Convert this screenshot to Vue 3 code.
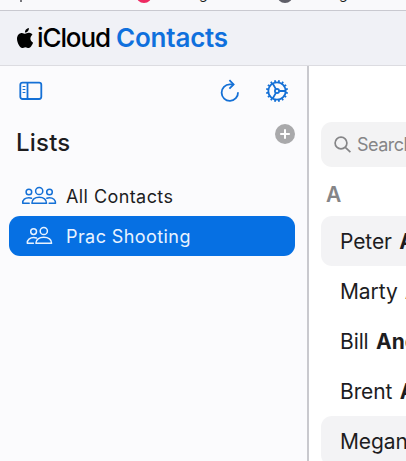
<template>
  <div class="app">
    <div class="browser-strip">
      <span class="strip-tick"></span>
      <span class="strip-dot pink"></span>
      <span class="strip-text">g</span>
      <span class="strip-dot grey"></span>
      <span class="strip-text second">g</span>
    </div>

    <header class="header">
      <svg class="apple" viewBox="62 0 682 1000" preserveAspectRatio="none" aria-hidden="true">
        <path d="M744 341c-6 4-93 62-93 190 0 148 112 200 116 202-1 3-18 72-60 142-36 61-75 123-134 123s-74-40-141-40c-66 0-89 41-143 41s-91-57-134-127C104 790 62 663 62 542c0-194 109-297 217-297 57 0 105 43 141 43 35 0 88-46 153-46 25 0 114 3 171 99zM541 159c27-37 46-88 46-139 0-7-1-14-2-20-43 2-95 34-127 75-24 32-47 83-47 135 0 8 1 16 2 18 3 1 7 1 11 1 39 0 88-30 117-70z" />
      </svg>
      <span class="brand">iCloud</span>
      <span class="product">Contacts</span>
    </header>

    <div class="body">
      <aside class="sidebar">
        <div class="toolbar">
          <svg class="icon-panel" width="24" height="20" viewBox="0 0 24 20">
            <rect x="1.3" y="1.6" width="21" height="16.4" rx="2.2" />
            <path d="M8.5 1.6v16.4" />
            <path class="thin" d="M3.6 5.5h2.8M3.6 8.5h2.8M3.6 11.5h2.8" />
          </svg>
          <svg class="icon-refresh" width="20" height="24" viewBox="0 0 20 24">
            <path d="M18 13.2A8.2 8.2 0 1 1 9.8 5.4h3.6" />
            <path d="M9.4 1.2l4.2 4.2-4.2 4.2" />
          </svg>
          <svg class="icon-gear" width="24" height="24" viewBox="-12 -12 24 24">
            <circle r="8.7" />
            <circle r="2.1" />
            <path d="M2.1 0H8.6M-1.1-1.9L-4.3-7.5M-1.1 1.9L-4.3 7.5" />
            <path v-for="n in 16" :key="n" d="M0-8.8V-11" :transform="`rotate(${n * 22.5 + 11.25})`" />
          </svg>
        </div>

        <div class="lists-head">
          <h2>Lists</h2>
          <svg width="20" height="20" viewBox="0 0 20 20">
            <circle cx="10" cy="10" r="10" fill="#a9a9ab" />
            <path d="M10 5.2v9.6M5.2 10h9.6" stroke="#fff" stroke-width="2" />
          </svg>
        </div>

        <ul class="lists">
          <li v-for="list in lists" :key="list.name" :class="{ selected: list.selected }">
            <svg v-if="list.selected" class="people" width="36" height="20" viewBox="0 0 36 20">
              <circle cx="12.6" cy="5.6" r="2.9" />
              <circle cx="22.8" cy="5" r="3.6" />
              <path d="M14.9 17.3c-.2-3.9 3.3-6 7.9-6s8 2.1 7.8 6z" />
              <path d="M12.4 17.3H6.3c-.2-3.5 2.7-5.7 6.5-5.7q1.5 0 2.6.4" />
            </svg>
            <svg v-else class="people" width="36" height="20" viewBox="0 0 36 20">
              <circle cx="7.9" cy="6" r="2.8" />
              <circle cx="18.2" cy="5" r="3.6" />
              <circle cx="28.5" cy="6" r="2.8" />
              <path d="M10.9 17.3c-.2-3.9 2.9-6 7.3-6s7.5 2.1 7.3 6z" />
              <path d="M8.2 17.3H1.7c-.2-3.5 2.5-5.6 6.2-5.6q1.5 0 2.7.5" />
              <path d="M28.2 17.3h6.3c.2-3.5-2.5-5.6-6-5.6q-1.5 0-2.7.5" />
            </svg>
            <span>{{ list.name }}</span>
          </li>
        </ul>
      </aside>

      <main class="contacts">
        <div class="search">
          <svg width="18" height="18" viewBox="0 0 18 18">
            <circle cx="7" cy="7" r="5.9" />
            <path d="M11.3 11.3l5.1 4.9" />
          </svg>
          <span>Search</span>
        </div>
        <h3>A</h3>
        <div v-for="c in contacts" :key="c.first" class="contact" :class="{ shaded: c.shaded }">
          <span class="first">{{ c.first }}</span>
          <b>{{ c.last }}</b>
        </div>
      </main>
    </div>
  </div>
</template>

<script setup>
const lists = [
  { name: 'All Contacts', selected: false },
  { name: 'Prac Shooting', selected: true }
];

const contacts = [
  { first: 'Peter', last: 'A', shaded: true },
  { first: 'Marty', last: 'A' },
  { first: 'Bill', last: 'And' },
  { first: 'Brent', last: 'A' },
  { first: 'Megan', last: '', shaded: true }
];
</script>

<style>
body {
  margin: 0;
  overflow: hidden;
}
</style>

<style scoped>
.app {
  width: 406px;
  height: 461px;
  display: flex;
  flex-direction: column;
  overflow: hidden;
  background: #fff;
  color: #1d1d1f;
  font-family: Inter, "Liberation Sans", sans-serif;
}

.browser-strip {
  box-sizing: border-box;
  flex: none;
  height: 11px;
  display: flex;
  align-items: flex-start;
  overflow: hidden;
  background: #f9f9fb;
  border-bottom: 1px solid #c9c9d0;
}

.strip-tick {
  width: 2px;
  height: 2px;
  margin-left: 20px;
  background: #77777c;
}

.strip-dot {
  flex: none;
  width: 16px;
  height: 16px;
  margin-top: -13px;
  border-radius: 50%;
}

.strip-dot.pink {
  margin-left: 114px;
  background: #ee2a62;
}

.strip-dot.grey {
  margin-left: 69px;
  background: #5f5f68;
}

.strip-text {
  width: 9px;
  margin: -15px 0 0 47px;
  font-size: 14px;
  line-height: 18px;
}

.strip-text.second {
  margin-left: 46px;
}

.header {
  box-sizing: border-box;
  flex: none;
  height: 55px;
  display: flex;
  align-items: center;
  padding: 0 0 0 17px;
  background: #f0f1f6;
  border-bottom: 1px solid #dcdce1;
  font-size: 26px;
  line-height: 32px;
  white-space: nowrap;
}

.apple {
  width: 15.5px;
  height: 20px;
  margin: 0 4.5px 0 0;
  overflow: visible;
}

.brand {
  width: 79px;
  color: #000;
  font-weight: 500;
  letter-spacing: -1.1px;
}

.product {
  color: #0f70dd;
  font-weight: 600;
  letter-spacing: -0.2px;
}

.body {
  flex: 1;
  display: flex;
  min-height: 0;
}

.sidebar {
  box-sizing: border-box;
  flex: none;
  width: 309px;
  background: #fbfbfd;
  border-right: 2px solid #c9c9ce;
}

.toolbar {
  height: 50px;
  display: flex;
  align-items: center;
  padding-left: 19px;
}

.toolbar svg {
  fill: none;
  stroke: #1470d6;
  stroke-width: 1.8;
}

.toolbar .thin {
  stroke-width: 1.1;
}

.icon-refresh {
  margin-left: 177px;
}

.icon-gear {
  margin-left: 25px;
}

.lists-head {
  height: 60px;
  display: flex;
  justify-content: space-between;
  padding: 0 12px 0 16px;
}

.lists-head svg {
  margin-top: 8px;
}

h2 {
  margin: 11px 0 0;
  font-size: 24px;
  font-weight: 500;
  line-height: 32px;
  letter-spacing: 0.2px;
}

.lists {
  margin: 0;
  padding: 0 12px 0 9px;
  list-style: none;
}

.lists li {
  height: 40px;
  display: flex;
  align-items: center;
  padding-left: 12px;
  border-radius: 11px;
  font-size: 18px;
  letter-spacing: 0.42px;
}

.lists span {
  margin-left: 9px;
}

.lists .selected {
  background: #0670e3;
  color: #e9f3ff;
}

.people {
  fill: none;
  stroke: #1470d6;
  stroke-width: 1.5;
  stroke-linejoin: round;
  stroke-linecap: round;
}

.selected .people {
  stroke: #e9f3ff;
}

.contacts {
  flex: 1;
  min-width: 0;
  padding: 56px 0 0 12px;
  overflow: hidden;
  white-space: nowrap;
}

.search {
  height: 45px;
  display: flex;
  align-items: center;
  padding-left: 13px;
  border-radius: 11px 0 0 11px;
  background: #f3f3f4;
  color: #858587;
  font-size: 18px;
  letter-spacing: -0.5px;
}

.search svg {
  flex: none;
  fill: none;
  stroke: #858587;
  stroke-width: 1.7;
  margin-right: 5px;
}

h3 {
  height: 49px;
  margin: 0 0 0 5px;
  color: #858587;
  font-size: 21px;
  font-weight: 600;
  line-height: 55px;
}

.contact {
  height: 50px;
  padding-left: 19px;
  border-radius: 11px 0 0 11px;
  font-size: 21px;
  line-height: 52px;
  letter-spacing: -0.1px;
}

.shaded {
  background: #f3f3f5;
}

.contact b {
  margin-left: 7.5px;
  font-weight: 700;
}
</style>
